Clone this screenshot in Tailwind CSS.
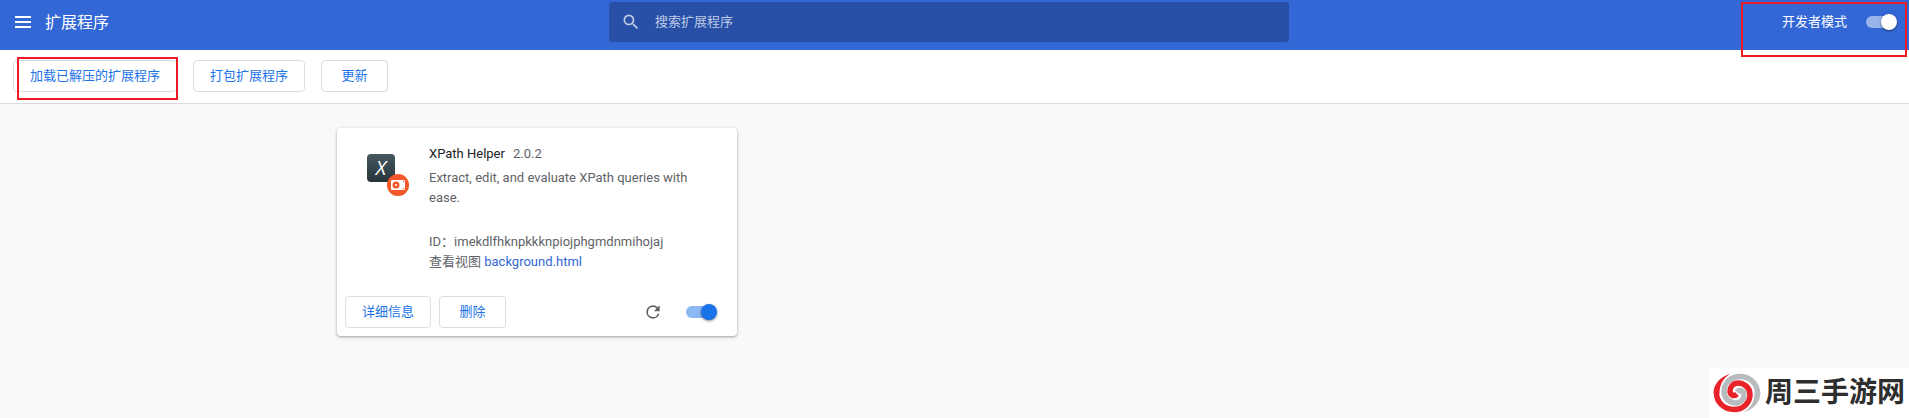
<!DOCTYPE html>
<html lang="zh-CN">
<head>
  <meta charset="UTF-8" />
  <meta name="viewport" content="width=device-width, initial-scale=1.0" />
  <title>扩展程序</title>
  <script src="https://cdn.jsdelivr.net/npm/@tailwindcss/browser@4"></script>
</head>
<body class="relative min-h-screen bg-[#f8f9fa] font-['Roboto','Noto_Sans_CJK_SC',sans-serif] text-[13px] leading-5 text-[#5f6368]">
  <!-- header -->
  <header class="grid grid-cols-[1fr_680px_1fr] items-center bg-[#3367d6] pt-0.5 pr-[11px] pb-2 text-white">
    <div class="flex items-center gap-3 pl-[13px]">
      <button type="button" aria-label="主菜单" class="size-5">
        <svg viewBox="0 0 20 20" class="size-5" fill="currentColor"><path d="M2 4h16v2H2zM2 9h16v2H2zM2 14h16v2H2z" /></svg>
      </button>
      <h1 class="pt-0.5 text-base leading-6">扩展程序</h1>
    </div>
    <div class="flex h-10 items-center gap-3.5 rounded-[3px] bg-[#2850a7] pl-3">
      <svg viewBox="0 0 24 24" class="size-5 shrink-0 text-[#bfcbe5]" fill="currentColor" aria-hidden="true"><path d="M15.5 14h-.79l-.28-.27A6.47 6.47 0 0 0 16 9.5 6.5 6.5 0 1 0 9.5 16c1.61 0 3.09-.59 4.23-1.57l.27.28v.79l5 4.99L20.49 19l-4.99-5zm-6 0C7.01 14 5 11.99 5 9.5S7.01 5 9.5 5 14 7.01 14 9.5 11.99 14 9.5 14z" /></svg>
      <input type="search" aria-label="搜索扩展程序" placeholder="搜索扩展程序" class="w-full bg-transparent pr-4 outline-none placeholder:text-[#bfcbe5]" />
    </div>
    <div class="flex items-center justify-end gap-[19px] pr-1">
      <label for="dev-mode">开发者模式</label>
      <input id="dev-mode" type="checkbox" role="switch" checked class="relative h-3 w-7 appearance-none rounded-full bg-white/50 before:absolute before:-top-0.5 before:left-[15px] before:size-4 before:rounded-full before:bg-white before:shadow-sm before:shadow-black/40 before:content-['']" />
    </div>
  </header>

  <!-- developer toolbar -->
  <div class="flex gap-4 border-b border-[#dadce0] bg-white px-[13px] pt-2.5 pb-[11px] text-[#1a73e8]">
    <button type="button" class="h-8 rounded border border-[#dadce0] px-4">加载已解压的扩展程序</button>
    <button type="button" class="h-8 rounded border border-[#dadce0] px-4">打包扩展程序</button>
    <button type="button" class="h-8 w-[67px] rounded border border-[#dadce0]">更新</button>
  </div>

  <!-- extension list -->
  <main class="grid grid-cols-[repeat(3,400px)] justify-center gap-3 pt-6 pr-[11px]">
    <article class="flex h-[208px] flex-col rounded bg-white shadow-[0_1px_2px_rgba(60,64,67,0.3),0_1px_3px_1px_rgba(60,64,67,0.15)]">
      <div class="flex flex-1 gap-5 pt-4 pl-6">
        <svg viewBox="0 0 48 48" class="mt-1 size-12 shrink-0" aria-hidden="true">
          <defs>
            <linearGradient id="tile" x1="0" y1="0" x2="0" y2="1">
              <stop offset="0" stop-color="#455a60" />
              <stop offset="1" stop-color="#26343a" />
            </linearGradient>
          </defs>
          <rect x="6" y="6" width="28" height="28" rx="4" fill="url(#tile)" />
          <text x="20" y="27" text-anchor="middle" font-family="Open Sans, Noto Sans" font-style="italic" font-size="20" fill="#fff">X</text>
          <circle cx="37" cy="37.5" r="11" fill="#000" opacity=".15" />
          <circle cx="37" cy="37" r="11" fill="#f4572a" />
          <rect x="30" y="32" width="14" height="10" rx="1" fill="#fff" />
          <circle cx="35" cy="37" r="3.5" fill="#f4572a" />
          <circle cx="35" cy="37" r="1" fill="#fff" />
          <circle cx="42.5" cy="33.5" r=".7" fill="#f4572a" />
          <circle cx="42.5" cy="40.5" r=".7" fill="#f4572a" />
        </svg>
        <div class="min-w-0 flex-1 pr-10">
          <div class="mb-1 flex gap-2">
            <h2 class="text-[#202124]">XPath Helper</h2>
            <span>2.0.2</span>
          </div>
          <p class="mb-6">Extract, edit, and evaluate XPath queries with ease.</p>
          <p>ID：imekdlfhknpkkknpiojphgmdnmihojaj</p>
          <p>查看视图 <a href="#" class="text-[#3367d6]">background.html</a></p>
        </div>
      </div>
      <div class="flex items-center gap-2 pr-[23px] pb-2 pl-2 text-[#1a73e8]">
        <button type="button" class="h-8 rounded border border-[#dadce0] px-4">详细信息</button>
        <button type="button" class="h-8 w-[67px] rounded border border-[#dadce0]">删除</button>
        <button type="button" aria-label="重新加载" class="mr-[15px] ml-auto size-5 text-[#5f6368]">
          <svg viewBox="0 0 24 24" class="size-5" fill="currentColor"><path d="M17.65 6.35A7.96 7.96 0 0 0 12 4a8 8 0 1 0 7.73 10h-2.08A6 6 0 1 1 12 6c1.66 0 3.14.69 4.22 1.78L13 11h7V4l-2.35 2.35z" /></svg>
        </button>
        <input type="checkbox" role="switch" aria-label="启用 XPath Helper" checked class="relative h-3 w-7 appearance-none rounded-full bg-[#8cb9f4] before:absolute before:-top-0.5 before:left-[15px] before:size-4 before:rounded-full before:bg-[#1a73e8] before:shadow-sm before:shadow-black/40 before:content-['']" />
      </div>
    </article>
  </main>

  <!-- highlights -->
  <div class="pointer-events-none absolute top-[57px] left-[17px] h-[43px] w-[161px] border-2 border-[#ed1c24]"></div>
  <div class="pointer-events-none absolute top-0.5 right-0.5 h-[55px] w-[166px] border-2 border-[#ed1c24]"></div>

  <!-- site badge -->
  <div class="absolute right-0 bottom-0 flex h-[50px] w-[200px] items-center gap-1 bg-white pl-1">
    <svg viewBox="0 0 48 48" class="size-12 shrink-0" fill="none" aria-hidden="true">
      <defs>
        <g id="arm">
          <path d="M17 5C7 8 .5 15 .5 24.500h6C6.500 16 10 9 17 5z" fill="currentColor" />
          <path d="M3.500 24C3.500 34 12 40.500 21 40.500 31 40.500 37 33 37 25.500 37 18.500 31 14 25 14c-5 0-8 4-8 8 0 4 4 6 7 3" stroke="currentColor" stroke-width="5.500" />
        </g>
      </defs>
      <use href="#arm" class="text-[#b9bcbe]" transform="rotate(180 24 24)" />
      <use href="#arm" class="text-[#e8232a]" />
    </svg>
    <span class="text-[28px] leading-8 font-bold whitespace-nowrap text-[#2e2e2e]">周三手游网</span>
  </div>
</body>
</html>
